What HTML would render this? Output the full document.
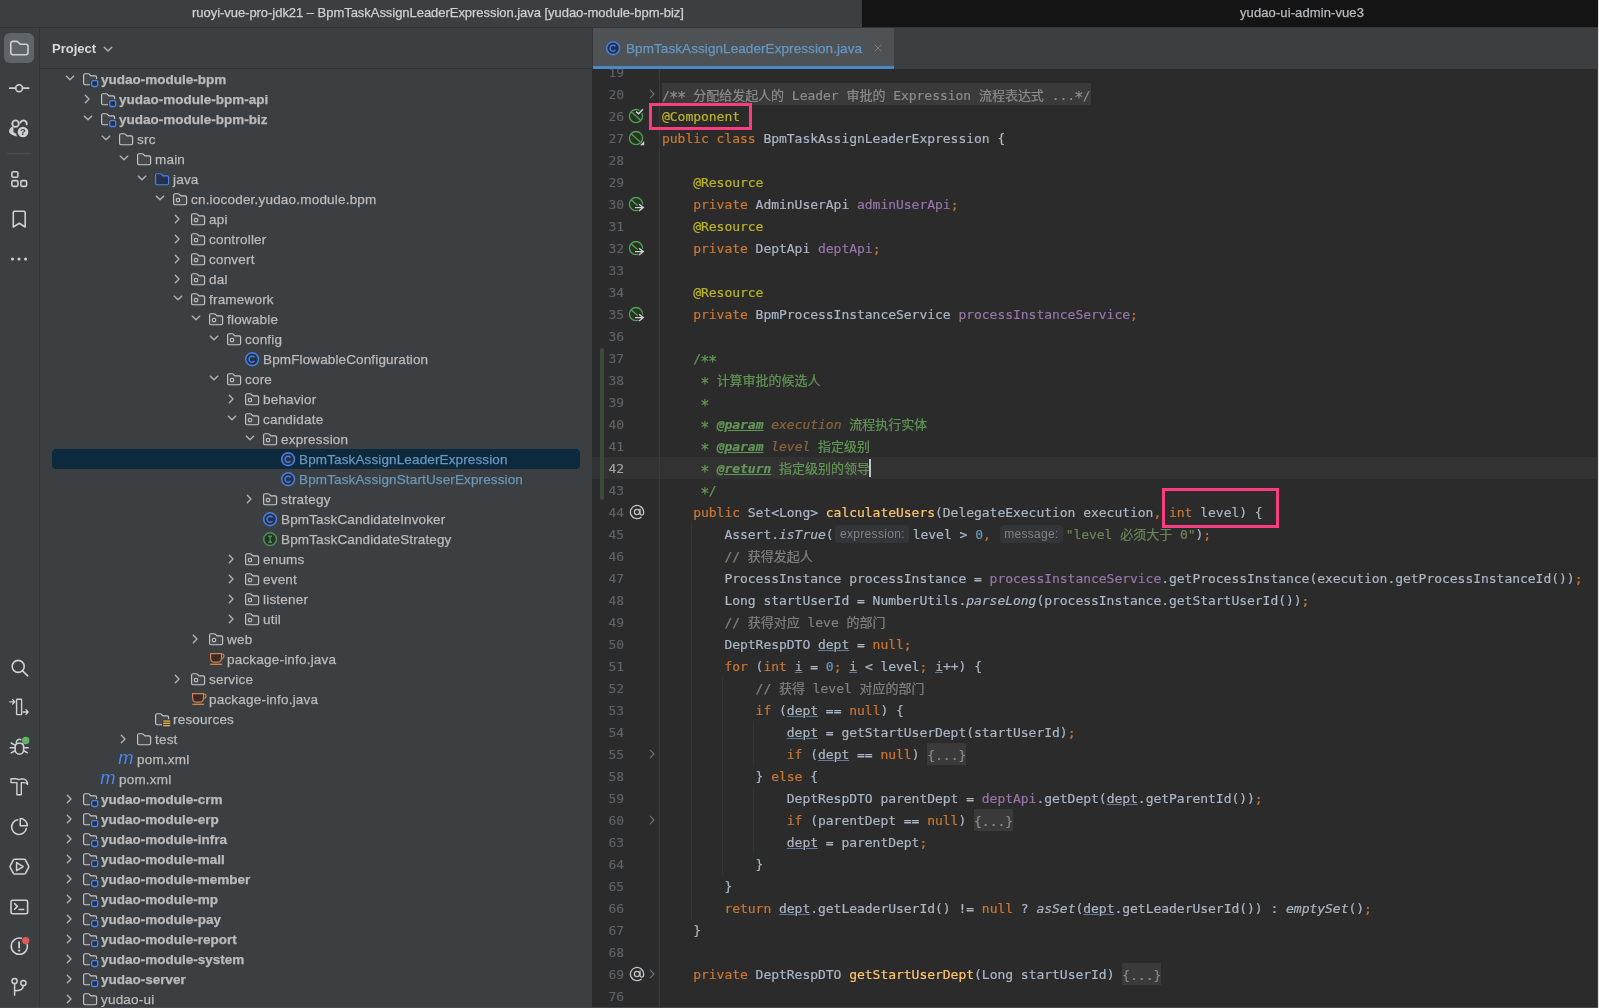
<!DOCTYPE html>
<html><head><meta charset="utf-8"><title>IDE</title><style>
*{box-sizing:border-box}
html,body{margin:0;padding:0;background:#3c3f41}
body{width:1599px;height:1008px;overflow:hidden;background:#3c3f41;position:relative;font-family:"Liberation Sans","Noto Sans CJK SC",sans-serif;font-size:13.5px;color:#bbbbbb;letter-spacing:.2px}
#root{position:absolute;left:0;top:0;width:1599px;height:1008px;will-change:transform}
.abs{position:absolute}
#title{left:192px;top:0;height:27px;line-height:26px;white-space:pre;font-size:13px;letter-spacing:-0.04px;color:#cfd0d2;-webkit-text-stroke:.25px}
#title2{left:862px;top:0;width:737px;height:27px;line-height:26px;background:#141414;padding-left:378px;white-space:pre;font-size:13px;letter-spacing:0.1px;color:#b9babc;-webkit-text-stroke:.25px}
#tline{left:0;top:27px;width:1599px;height:1px;background:#323436}
#strip{left:0;top:28px;width:39px;height:980px}
#sline{left:39px;top:28px;width:1px;height:980px;background:#323436}
#phead{left:40px;top:28px;width:552px;height:40px}
#pline{left:40px;top:68px;width:552px;height:1px;background:#323436}
#ptitle{left:52px;top:29px;height:40px;line-height:40px;font-weight:bold;color:#d6d8dc;font-size:13px;letter-spacing:0}
.row{position:absolute;left:40px;width:552px;height:20px;line-height:20px;white-space:pre}
.row span{position:absolute;top:1px;-webkit-text-stroke:.25px}
.row svg{position:absolute}
.b{font-weight:bold;letter-spacing:0}
.blue{color:#6897bb}
.cm{letter-spacing:.13px}
#sel{left:52px;top:449px;width:528px;height:20px;background:#0d293e;border-radius:4px}
#tabs{left:592px;top:28px;width:1007px;height:41px;background:#3c3f41;border-left:1px solid #333537}
#tab{left:593px;top:28px;width:301px;height:38px;background:#4e5254}
#tabu{left:593px;top:66px;width:301px;height:3px;background:#4a88c7}
#tabt{left:626px;top:29px;height:38px;line-height:39px;color:#6398c6;white-space:pre;letter-spacing:.08px;-webkit-text-stroke:.25px}
#editor{left:592px;top:69px;width:1007px;height:939px;background:#2b2b2b;overflow:hidden}
#caretrow{left:0;top:388px;width:1007px;height:22px;background:#323232}
.cl{position:absolute;left:70px;height:22px;line-height:22px;white-space:pre;font-family:"DejaVu Sans Mono","Noto Sans CJK SC",monospace;font-size:13px;letter-spacing:-0.0267px;color:#a9b7c6;-webkit-text-stroke:.2px}
.num{position:absolute;left:0;width:32px;text-align:right;height:22px;line-height:22px;font-family:"DejaVu Sans Mono",monospace;font-size:13px;letter-spacing:-0.0267px;color:#606366;-webkit-text-stroke:.15px}
.k{color:#cc7832}.a{color:#bbb529}.f{color:#9876aa}.m{color:#ffc66d}.s{color:#6a8759}.n{color:#6897bb}.c{color:#808080}.d{color:#629755}
.dt{color:#629755;font-weight:bold;font-style:italic;text-decoration:underline}
.dp{color:#8a653b;font-style:italic}
.i{font-style:italic}
.st{font-size:15.5px;margin:0 -0.75px;position:relative;top:3.8px;line-height:0}
.u{text-decoration:underline;text-decoration-color:#5f7b95;text-underline-offset:1px;text-decoration-thickness:1px}
.fold{background:#3a3a3a;color:#8c8c8c;padding-top:4.5px;padding-bottom:2.9px}
.hint{display:inline-block;-webkit-text-stroke:0;font-family:"Liberation Sans",sans-serif;font-size:12px;letter-spacing:.3px;color:#7f8287;background:#333538;border-radius:4px;height:18px;line-height:18px;vertical-align:top;margin-top:.5px;text-align:center}
.guide{position:absolute;width:1px;background:#353535}
.pink{position:absolute;border:3.8px solid #fb3c7f}
#gsep{left:67px;top:0;width:1px;height:939px;background:#37393b}
#vbar{left:8px;top:279px;width:4px;height:152px;background:#384c38;border-radius:2px}
#caret{position:absolute;width:2px;height:17.6px;background:#c4c6c9}
#redge{left:1598px;top:0;width:1px;height:1008px;background:#dcdcdc}
#redge2{left:1597px;top:28px;width:1px;height:980px;background:#3c3f41}
#bedge{left:0;top:1007px;width:1598px;height:1px;background:#46484b}
</style></head><body><div id="root">
<div id="title" class="abs">ruoyi-vue-pro-jdk21 – BpmTaskAssignLeaderExpression.java [yudao-module-bpm-biz]</div>
<div id="title2" class="abs">yudao-ui-admin-vue3</div>
<div id="tline" class="abs"></div>
<div id="sline" class="abs"></div>
<div class="abs" style="left:4px;top:33px;width:30px;height:30px;border-radius:6px;background:#5f6468"></div>
<div class="abs" style="left:7px;top:153px;width:24px;height:1px;background:#4b4e52"></div>
<svg class="abs" style="left:0;top:0" width="40" height="1008" viewBox="0 0 40 1008" fill="none" stroke="#ced0d6" stroke-width="1.6" stroke-linecap="round" stroke-linejoin="round">
<path d="M10.8 43.6 Q10.8 41.4 13 41.4 L16.6 41.4 Q17.4 41.4 18 42 L20.2 44.2 L25.8 44.2 Q28 44.2 28 46.4 L28 52.6 Q28 54.8 25.8 54.8 L13 54.8 Q10.8 54.8 10.8 52.6 Z"/>
<circle cx="19.1" cy="88.2" r="3.4"/><path d="M9.8 88.2H15.6M22.6 88.2H28.6" stroke-width="1.8"/>
<circle cx="15.55" cy="123.65" r="3.25" stroke-width="1.9"/>
<path d="M20.25 123.5 A3.25 3.25 0 1 1 26.4 125.2" stroke-width="1.9" stroke-linecap="butt"/>
<path d="M12.5 126.4 C9.6 128 8.6 130.4 9.2 132.2 C9.8 133.6 13 135.8 17.4 136.5 C16.6 135.6 16.2 134.6 16.1 133.6 C14.4 133 13.4 132.4 13.4 131.6 L13.4 127 Z" fill="#ced0d6" stroke="none"/>
<circle cx="23" cy="132" r="6.5" fill="#3c3f41" stroke="none"/>
<circle cx="23" cy="132" r="5.35" fill="#ced0d6" stroke="none"/>
<text x="23" y="135.3" text-anchor="middle" font-family="Liberation Sans, sans-serif" font-weight="bold" font-size="9.5" fill="#3c3f41" stroke="none">?</text>
<rect x="11.9" y="171.7" width="6" height="5.6" rx="1.3"/><rect x="11.9" y="180.6" width="6" height="5.8" rx="1.3"/><rect x="20.8" y="180.6" width="5.8" height="5.8" rx="1.3"/>
<path d="M13.3 212.4 Q13.3 211.2 14.5 211.2 L24 211.2 Q25.2 211.2 25.2 212.4 L25.2 227 L19.25 223.3 L13.3 227 Z"/>
<g fill="#ced0d6" stroke="none"><circle cx="12.5" cy="259" r="1.55"/><circle cx="19" cy="259" r="1.55"/><circle cx="25.6" cy="259" r="1.55"/></g>
<circle cx="18.2" cy="666.4" r="6"/><path d="M22.6 670.9 L27.7 675.8"/>
<rect x="16.6" y="699.2" width="5" height="15.4" rx="0.6" stroke-width="1.4"/>
<path d="M9.8 701.8H14.6M12.6 699.6L14.8 701.8L12.6 704" stroke-width="1.3"/><path d="M23.2 712H28M26 709.8L28.2 712L26 714.2" stroke-width="1.3"/>
<path d="M15.2 746.6 Q15.2 743.2 18.6 743.2 L20.2 743.2 Q23.6 743.2 23.6 746.6 L23.6 750 A4.2 4.2 0 0 1 15.2 750 Z" stroke-width="1.6"/>
<path d="M16.3 742.4 A3.3 3.3 0 0 1 20.8 739.6" stroke-width="1.5"/>
<path d="M11.2 743L14.4 744.8M10.2 747.8H14.6M11.2 752.8L14.6 751M24.4 751L27.4 752.8M24.3 747.8H28.3" stroke-width="1.5"/>
<circle cx="25.7" cy="740.5" r="3.7" fill="#5fb565" stroke="none"/>
<path d="M11 778.8 L11 782.6 L16.9 782.6 L16.9 794.8 L21.3 794.8 L21.3 782.6 L23.6 782.6 C25.6 782.6 27 783.2 27.6 784.4 C27.8 781 25.4 778.8 21.6 778.8 L19 779.6 L16 778.8 Z" stroke-width="1.4"/>
<path d="M17.6 819.8 A7.4 7.4 0 1 0 26.3 828.6"/>
<path d="M20.2 818.6 A7.2 7.2 0 0 1 27.4 825.8 L20.2 825.8 Z" stroke-width="1.5"/>
<path d="M14.6 859.2 L24.2 859.2 Q25 859.2 25.4 859.9 L28.6 865.9 Q29 866.6 28.6 867.3 L25.4 873.3 Q25 874 24.2 874 L14.6 874 Q13.8 874 13.4 873.3 L10.2 867.3 Q9.8 866.6 10.2 865.9 L13.4 859.9 Q13.8 859.2 14.6 859.2 Z"/>
<path d="M16.6 862.6 L23.2 866.6 L16.6 870.6 Z" stroke-width="1.5"/>
<rect x="11" y="900.2" width="16.6" height="13.6" rx="1.6"/><path d="M14.6 903.6L17.4 906.4L14.6 909.2M19 909.6H23.6" stroke-width="1.5"/>
<path d="M21.2 938.3 A8.1 8.1 0 1 0 27.3 944.6"/>
<path d="M19.1 942.2V947.6" stroke-width="1.8"/>
<circle cx="19.1" cy="950.6" r="1.15" fill="#ced0d6" stroke="none"/>
<circle cx="25.7" cy="940.6" r="3.7" fill="#db5c5c" stroke="none"/>
<circle cx="14.6" cy="981" r="2.6" stroke-width="1.5"/><circle cx="23.4" cy="983" r="2.6" stroke-width="1.5"/><path d="M14.6 983.8V995.2M23.4 985.8 C23.4 990 20 990.8 14.8 990.8" stroke-width="1.5"/>
</svg>
<div id="ptitle" class="abs">Project</div>
<svg class="abs" style="left:103px;top:43.6px" width="10" height="10" viewBox="0 0 10 10"><path d="M1.2 3.2 L5 7 L8.8 3.2" fill="none" stroke="#b1b4b8" stroke-width="1.35" stroke-linecap="round" stroke-linejoin="round"/></svg>
<div id="pline" class="abs"></div>
<div id="sel" class="abs"></div>
<div class="row" style="top:69px"><svg style="left:24.5px;top:4.4px" width="10" height="10" viewBox="0 0 10 10"><path d="M1.2 3.1 L5 6.8 L8.8 3.1" fill="none" stroke="#b1b4b8" stroke-width="1.35" stroke-linecap="round" stroke-linejoin="round"/></svg><svg style="left:42px;top:2px" width="17" height="17" viewBox="0 0 17 17"><path d="M1.6 4.2 Q1.6 2.7 3.1 2.7 L6.2 2.7 Q6.8 2.7 7.3 3.2 L8.9 4.8 L13.1 4.8 Q14.6 4.8 14.6 6.3 L14.6 12.2 Q14.6 13.7 13.1 13.7 L3.1 13.7 Q1.6 13.7 1.6 12.2 Z" fill="#45474b" stroke="none"/><path d="M8 13.7 L3.1 13.7 Q1.6 13.7 1.6 12.2 L1.6 4.2 Q1.6 2.7 3.1 2.7 L6.2 2.7 Q6.8 2.7 7.3 3.2 L8.9 4.8 L13.1 4.8 Q14.6 4.8 14.6 6.3 L14.6 8.2" fill="none" stroke="#c6c8cc" stroke-width="1.15"/><rect x="8.3" y="8.3" width="8.7" height="8.7" fill="#3c3f41"/><rect x="9.7" y="9.6" width="6.0" height="5.9" rx="1.4" fill="#22304c" stroke="#4d84ea" stroke-width="1.3"/></svg><span class="b" style="left:61px">yudao-module-bpm</span></div>
<div class="row" style="top:89px"><svg style="left:42.4px;top:4.6px" width="10" height="10" viewBox="0 0 10 10"><path d="M3.3 1.2 L7 5 L3.3 8.8" fill="none" stroke="#b1b4b8" stroke-width="1.35" stroke-linecap="round" stroke-linejoin="round"/></svg><svg style="left:60px;top:2px" width="17" height="17" viewBox="0 0 17 17"><path d="M1.6 4.2 Q1.6 2.7 3.1 2.7 L6.2 2.7 Q6.8 2.7 7.3 3.2 L8.9 4.8 L13.1 4.8 Q14.6 4.8 14.6 6.3 L14.6 12.2 Q14.6 13.7 13.1 13.7 L3.1 13.7 Q1.6 13.7 1.6 12.2 Z" fill="#45474b" stroke="none"/><path d="M8 13.7 L3.1 13.7 Q1.6 13.7 1.6 12.2 L1.6 4.2 Q1.6 2.7 3.1 2.7 L6.2 2.7 Q6.8 2.7 7.3 3.2 L8.9 4.8 L13.1 4.8 Q14.6 4.8 14.6 6.3 L14.6 8.2" fill="none" stroke="#c6c8cc" stroke-width="1.15"/><rect x="8.3" y="8.3" width="8.7" height="8.7" fill="#3c3f41"/><rect x="9.7" y="9.6" width="6.0" height="5.9" rx="1.4" fill="#22304c" stroke="#4d84ea" stroke-width="1.3"/></svg><span class="b" style="left:79px">yudao-module-bpm-api</span></div>
<div class="row" style="top:109px"><svg style="left:42.5px;top:4.4px" width="10" height="10" viewBox="0 0 10 10"><path d="M1.2 3.1 L5 6.8 L8.8 3.1" fill="none" stroke="#b1b4b8" stroke-width="1.35" stroke-linecap="round" stroke-linejoin="round"/></svg><svg style="left:60px;top:2px" width="17" height="17" viewBox="0 0 17 17"><path d="M1.6 4.2 Q1.6 2.7 3.1 2.7 L6.2 2.7 Q6.8 2.7 7.3 3.2 L8.9 4.8 L13.1 4.8 Q14.6 4.8 14.6 6.3 L14.6 12.2 Q14.6 13.7 13.1 13.7 L3.1 13.7 Q1.6 13.7 1.6 12.2 Z" fill="#45474b" stroke="none"/><path d="M8 13.7 L3.1 13.7 Q1.6 13.7 1.6 12.2 L1.6 4.2 Q1.6 2.7 3.1 2.7 L6.2 2.7 Q6.8 2.7 7.3 3.2 L8.9 4.8 L13.1 4.8 Q14.6 4.8 14.6 6.3 L14.6 8.2" fill="none" stroke="#c6c8cc" stroke-width="1.15"/><rect x="8.3" y="8.3" width="8.7" height="8.7" fill="#3c3f41"/><rect x="9.7" y="9.6" width="6.0" height="5.9" rx="1.4" fill="#22304c" stroke="#4d84ea" stroke-width="1.3"/></svg><span class="b" style="left:79px">yudao-module-bpm-biz</span></div>
<div class="row" style="top:129px"><svg style="left:60.5px;top:4.4px" width="10" height="10" viewBox="0 0 10 10"><path d="M1.2 3.1 L5 6.8 L8.8 3.1" fill="none" stroke="#b1b4b8" stroke-width="1.35" stroke-linecap="round" stroke-linejoin="round"/></svg><svg style="left:78px;top:2px" width="17" height="17" viewBox="0 0 17 17"><path d="M1.6 4.2 Q1.6 2.7 3.1 2.7 L6.2 2.7 Q6.8 2.7 7.3 3.2 L8.9 4.8 L13.1 4.8 Q14.6 4.8 14.6 6.3 L14.6 12.2 Q14.6 13.7 13.1 13.7 L3.1 13.7 Q1.6 13.7 1.6 12.2 Z" fill="#45474b" stroke="#c6c8cc" stroke-width="1.15"/></svg><span class="" style="left:97px">src</span></div>
<div class="row" style="top:149px"><svg style="left:78.5px;top:4.4px" width="10" height="10" viewBox="0 0 10 10"><path d="M1.2 3.1 L5 6.8 L8.8 3.1" fill="none" stroke="#b1b4b8" stroke-width="1.35" stroke-linecap="round" stroke-linejoin="round"/></svg><svg style="left:96px;top:2px" width="17" height="17" viewBox="0 0 17 17"><path d="M1.6 4.2 Q1.6 2.7 3.1 2.7 L6.2 2.7 Q6.8 2.7 7.3 3.2 L8.9 4.8 L13.1 4.8 Q14.6 4.8 14.6 6.3 L14.6 12.2 Q14.6 13.7 13.1 13.7 L3.1 13.7 Q1.6 13.7 1.6 12.2 Z" fill="#45474b" stroke="#c6c8cc" stroke-width="1.15"/></svg><span class="" style="left:115px">main</span></div>
<div class="row" style="top:169px"><svg style="left:96.5px;top:4.4px" width="10" height="10" viewBox="0 0 10 10"><path d="M1.2 3.1 L5 6.8 L8.8 3.1" fill="none" stroke="#b1b4b8" stroke-width="1.35" stroke-linecap="round" stroke-linejoin="round"/></svg><svg style="left:114px;top:2px" width="17" height="17" viewBox="0 0 17 17"><path d="M1.6 4.2 Q1.6 2.7 3.1 2.7 L6.2 2.7 Q6.8 2.7 7.3 3.2 L8.9 4.8 L13.1 4.8 Q14.6 4.8 14.6 6.3 L14.6 12.2 Q14.6 13.7 13.1 13.7 L3.1 13.7 Q1.6 13.7 1.6 12.2 Z" fill="#25324d" stroke="#4d84ea" stroke-width="1.15"/></svg><span class="" style="left:133px">java</span></div>
<div class="row" style="top:189px"><svg style="left:114.5px;top:4.4px" width="10" height="10" viewBox="0 0 10 10"><path d="M1.2 3.1 L5 6.8 L8.8 3.1" fill="none" stroke="#b1b4b8" stroke-width="1.35" stroke-linecap="round" stroke-linejoin="round"/></svg><svg style="left:132px;top:2px" width="17" height="17" viewBox="0 0 17 17"><path d="M1.6 4.2 Q1.6 2.7 3.1 2.7 L6.2 2.7 Q6.8 2.7 7.3 3.2 L8.9 4.8 L13.1 4.8 Q14.6 4.8 14.6 6.3 L14.6 12.2 Q14.6 13.7 13.1 13.7 L3.1 13.7 Q1.6 13.7 1.6 12.2 Z" fill="#45474b" stroke="#c6c8cc" stroke-width="1.15"/><circle cx="6" cy="9.1" r="1.8" fill="none" stroke="#c6c8cc" stroke-width="1.1"/></svg><span class="" style="left:151px">cn.iocoder.yudao.module.bpm</span></div>
<div class="row" style="top:209px"><svg style="left:132.4px;top:4.6px" width="10" height="10" viewBox="0 0 10 10"><path d="M3.3 1.2 L7 5 L3.3 8.8" fill="none" stroke="#b1b4b8" stroke-width="1.35" stroke-linecap="round" stroke-linejoin="round"/></svg><svg style="left:150px;top:2px" width="17" height="17" viewBox="0 0 17 17"><path d="M1.6 4.2 Q1.6 2.7 3.1 2.7 L6.2 2.7 Q6.8 2.7 7.3 3.2 L8.9 4.8 L13.1 4.8 Q14.6 4.8 14.6 6.3 L14.6 12.2 Q14.6 13.7 13.1 13.7 L3.1 13.7 Q1.6 13.7 1.6 12.2 Z" fill="#45474b" stroke="#c6c8cc" stroke-width="1.15"/><circle cx="6" cy="9.1" r="1.8" fill="none" stroke="#c6c8cc" stroke-width="1.1"/></svg><span class="" style="left:169px">api</span></div>
<div class="row" style="top:229px"><svg style="left:132.4px;top:4.6px" width="10" height="10" viewBox="0 0 10 10"><path d="M3.3 1.2 L7 5 L3.3 8.8" fill="none" stroke="#b1b4b8" stroke-width="1.35" stroke-linecap="round" stroke-linejoin="round"/></svg><svg style="left:150px;top:2px" width="17" height="17" viewBox="0 0 17 17"><path d="M1.6 4.2 Q1.6 2.7 3.1 2.7 L6.2 2.7 Q6.8 2.7 7.3 3.2 L8.9 4.8 L13.1 4.8 Q14.6 4.8 14.6 6.3 L14.6 12.2 Q14.6 13.7 13.1 13.7 L3.1 13.7 Q1.6 13.7 1.6 12.2 Z" fill="#45474b" stroke="#c6c8cc" stroke-width="1.15"/><circle cx="6" cy="9.1" r="1.8" fill="none" stroke="#c6c8cc" stroke-width="1.1"/></svg><span class="" style="left:169px">controller</span></div>
<div class="row" style="top:249px"><svg style="left:132.4px;top:4.6px" width="10" height="10" viewBox="0 0 10 10"><path d="M3.3 1.2 L7 5 L3.3 8.8" fill="none" stroke="#b1b4b8" stroke-width="1.35" stroke-linecap="round" stroke-linejoin="round"/></svg><svg style="left:150px;top:2px" width="17" height="17" viewBox="0 0 17 17"><path d="M1.6 4.2 Q1.6 2.7 3.1 2.7 L6.2 2.7 Q6.8 2.7 7.3 3.2 L8.9 4.8 L13.1 4.8 Q14.6 4.8 14.6 6.3 L14.6 12.2 Q14.6 13.7 13.1 13.7 L3.1 13.7 Q1.6 13.7 1.6 12.2 Z" fill="#45474b" stroke="#c6c8cc" stroke-width="1.15"/><circle cx="6" cy="9.1" r="1.8" fill="none" stroke="#c6c8cc" stroke-width="1.1"/></svg><span class="" style="left:169px">convert</span></div>
<div class="row" style="top:269px"><svg style="left:132.4px;top:4.6px" width="10" height="10" viewBox="0 0 10 10"><path d="M3.3 1.2 L7 5 L3.3 8.8" fill="none" stroke="#b1b4b8" stroke-width="1.35" stroke-linecap="round" stroke-linejoin="round"/></svg><svg style="left:150px;top:2px" width="17" height="17" viewBox="0 0 17 17"><path d="M1.6 4.2 Q1.6 2.7 3.1 2.7 L6.2 2.7 Q6.8 2.7 7.3 3.2 L8.9 4.8 L13.1 4.8 Q14.6 4.8 14.6 6.3 L14.6 12.2 Q14.6 13.7 13.1 13.7 L3.1 13.7 Q1.6 13.7 1.6 12.2 Z" fill="#45474b" stroke="#c6c8cc" stroke-width="1.15"/><circle cx="6" cy="9.1" r="1.8" fill="none" stroke="#c6c8cc" stroke-width="1.1"/></svg><span class="" style="left:169px">dal</span></div>
<div class="row" style="top:289px"><svg style="left:132.5px;top:4.4px" width="10" height="10" viewBox="0 0 10 10"><path d="M1.2 3.1 L5 6.8 L8.8 3.1" fill="none" stroke="#b1b4b8" stroke-width="1.35" stroke-linecap="round" stroke-linejoin="round"/></svg><svg style="left:150px;top:2px" width="17" height="17" viewBox="0 0 17 17"><path d="M1.6 4.2 Q1.6 2.7 3.1 2.7 L6.2 2.7 Q6.8 2.7 7.3 3.2 L8.9 4.8 L13.1 4.8 Q14.6 4.8 14.6 6.3 L14.6 12.2 Q14.6 13.7 13.1 13.7 L3.1 13.7 Q1.6 13.7 1.6 12.2 Z" fill="#45474b" stroke="#c6c8cc" stroke-width="1.15"/><circle cx="6" cy="9.1" r="1.8" fill="none" stroke="#c6c8cc" stroke-width="1.1"/></svg><span class="" style="left:169px">framework</span></div>
<div class="row" style="top:309px"><svg style="left:150.5px;top:4.4px" width="10" height="10" viewBox="0 0 10 10"><path d="M1.2 3.1 L5 6.8 L8.8 3.1" fill="none" stroke="#b1b4b8" stroke-width="1.35" stroke-linecap="round" stroke-linejoin="round"/></svg><svg style="left:168px;top:2px" width="17" height="17" viewBox="0 0 17 17"><path d="M1.6 4.2 Q1.6 2.7 3.1 2.7 L6.2 2.7 Q6.8 2.7 7.3 3.2 L8.9 4.8 L13.1 4.8 Q14.6 4.8 14.6 6.3 L14.6 12.2 Q14.6 13.7 13.1 13.7 L3.1 13.7 Q1.6 13.7 1.6 12.2 Z" fill="#45474b" stroke="#c6c8cc" stroke-width="1.15"/><circle cx="6" cy="9.1" r="1.8" fill="none" stroke="#c6c8cc" stroke-width="1.1"/></svg><span class="" style="left:187px">flowable</span></div>
<div class="row" style="top:329px"><svg style="left:168.5px;top:4.4px" width="10" height="10" viewBox="0 0 10 10"><path d="M1.2 3.1 L5 6.8 L8.8 3.1" fill="none" stroke="#b1b4b8" stroke-width="1.35" stroke-linecap="round" stroke-linejoin="round"/></svg><svg style="left:186px;top:2px" width="17" height="17" viewBox="0 0 17 17"><path d="M1.6 4.2 Q1.6 2.7 3.1 2.7 L6.2 2.7 Q6.8 2.7 7.3 3.2 L8.9 4.8 L13.1 4.8 Q14.6 4.8 14.6 6.3 L14.6 12.2 Q14.6 13.7 13.1 13.7 L3.1 13.7 Q1.6 13.7 1.6 12.2 Z" fill="#45474b" stroke="#c6c8cc" stroke-width="1.15"/><circle cx="6" cy="9.1" r="1.8" fill="none" stroke="#c6c8cc" stroke-width="1.1"/></svg><span class="" style="left:205px">config</span></div>
<div class="row" style="top:349px"><svg style="left:204px;top:2px" width="17" height="17" viewBox="0 0 17 17"><circle cx="8.1" cy="8.2" r="6.4" fill="#22304c" stroke="#4a7ede" stroke-width="1.55"/><path d="M10.5 6.5 A3 3 0 1 0 10.5 9.9" fill="none" stroke="#4a7ede" stroke-width="1.5"/></svg><span class="cm" style="left:223px">BpmFlowableConfiguration</span></div>
<div class="row" style="top:369px"><svg style="left:168.5px;top:4.4px" width="10" height="10" viewBox="0 0 10 10"><path d="M1.2 3.1 L5 6.8 L8.8 3.1" fill="none" stroke="#b1b4b8" stroke-width="1.35" stroke-linecap="round" stroke-linejoin="round"/></svg><svg style="left:186px;top:2px" width="17" height="17" viewBox="0 0 17 17"><path d="M1.6 4.2 Q1.6 2.7 3.1 2.7 L6.2 2.7 Q6.8 2.7 7.3 3.2 L8.9 4.8 L13.1 4.8 Q14.6 4.8 14.6 6.3 L14.6 12.2 Q14.6 13.7 13.1 13.7 L3.1 13.7 Q1.6 13.7 1.6 12.2 Z" fill="#45474b" stroke="#c6c8cc" stroke-width="1.15"/><circle cx="6" cy="9.1" r="1.8" fill="none" stroke="#c6c8cc" stroke-width="1.1"/></svg><span class="" style="left:205px">core</span></div>
<div class="row" style="top:389px"><svg style="left:186.4px;top:4.6px" width="10" height="10" viewBox="0 0 10 10"><path d="M3.3 1.2 L7 5 L3.3 8.8" fill="none" stroke="#b1b4b8" stroke-width="1.35" stroke-linecap="round" stroke-linejoin="round"/></svg><svg style="left:204px;top:2px" width="17" height="17" viewBox="0 0 17 17"><path d="M1.6 4.2 Q1.6 2.7 3.1 2.7 L6.2 2.7 Q6.8 2.7 7.3 3.2 L8.9 4.8 L13.1 4.8 Q14.6 4.8 14.6 6.3 L14.6 12.2 Q14.6 13.7 13.1 13.7 L3.1 13.7 Q1.6 13.7 1.6 12.2 Z" fill="#45474b" stroke="#c6c8cc" stroke-width="1.15"/><circle cx="6" cy="9.1" r="1.8" fill="none" stroke="#c6c8cc" stroke-width="1.1"/></svg><span class="" style="left:223px">behavior</span></div>
<div class="row" style="top:409px"><svg style="left:186.5px;top:4.4px" width="10" height="10" viewBox="0 0 10 10"><path d="M1.2 3.1 L5 6.8 L8.8 3.1" fill="none" stroke="#b1b4b8" stroke-width="1.35" stroke-linecap="round" stroke-linejoin="round"/></svg><svg style="left:204px;top:2px" width="17" height="17" viewBox="0 0 17 17"><path d="M1.6 4.2 Q1.6 2.7 3.1 2.7 L6.2 2.7 Q6.8 2.7 7.3 3.2 L8.9 4.8 L13.1 4.8 Q14.6 4.8 14.6 6.3 L14.6 12.2 Q14.6 13.7 13.1 13.7 L3.1 13.7 Q1.6 13.7 1.6 12.2 Z" fill="#45474b" stroke="#c6c8cc" stroke-width="1.15"/><circle cx="6" cy="9.1" r="1.8" fill="none" stroke="#c6c8cc" stroke-width="1.1"/></svg><span class="" style="left:223px">candidate</span></div>
<div class="row" style="top:429px"><svg style="left:204.5px;top:4.4px" width="10" height="10" viewBox="0 0 10 10"><path d="M1.2 3.1 L5 6.8 L8.8 3.1" fill="none" stroke="#b1b4b8" stroke-width="1.35" stroke-linecap="round" stroke-linejoin="round"/></svg><svg style="left:222px;top:2px" width="17" height="17" viewBox="0 0 17 17"><path d="M1.6 4.2 Q1.6 2.7 3.1 2.7 L6.2 2.7 Q6.8 2.7 7.3 3.2 L8.9 4.8 L13.1 4.8 Q14.6 4.8 14.6 6.3 L14.6 12.2 Q14.6 13.7 13.1 13.7 L3.1 13.7 Q1.6 13.7 1.6 12.2 Z" fill="#45474b" stroke="#c6c8cc" stroke-width="1.15"/><circle cx="6" cy="9.1" r="1.8" fill="none" stroke="#c6c8cc" stroke-width="1.1"/></svg><span class="" style="left:241px">expression</span></div>
<div class="row" style="top:449px"><svg style="left:240px;top:2px" width="17" height="17" viewBox="0 0 17 17"><circle cx="8.1" cy="8.2" r="6.4" fill="#22304c" stroke="#4a7ede" stroke-width="1.55"/><path d="M10.5 6.5 A3 3 0 1 0 10.5 9.9" fill="none" stroke="#4a7ede" stroke-width="1.5"/></svg><span class="blue cm" style="left:259px">BpmTaskAssignLeaderExpression</span></div>
<div class="row" style="top:469px"><svg style="left:240px;top:2px" width="17" height="17" viewBox="0 0 17 17"><circle cx="8.1" cy="8.2" r="6.4" fill="#22304c" stroke="#4a7ede" stroke-width="1.55"/><path d="M10.5 6.5 A3 3 0 1 0 10.5 9.9" fill="none" stroke="#4a7ede" stroke-width="1.5"/></svg><span class="blue cm" style="left:259px">BpmTaskAssignStartUserExpression</span></div>
<div class="row" style="top:489px"><svg style="left:204.4px;top:4.6px" width="10" height="10" viewBox="0 0 10 10"><path d="M3.3 1.2 L7 5 L3.3 8.8" fill="none" stroke="#b1b4b8" stroke-width="1.35" stroke-linecap="round" stroke-linejoin="round"/></svg><svg style="left:222px;top:2px" width="17" height="17" viewBox="0 0 17 17"><path d="M1.6 4.2 Q1.6 2.7 3.1 2.7 L6.2 2.7 Q6.8 2.7 7.3 3.2 L8.9 4.8 L13.1 4.8 Q14.6 4.8 14.6 6.3 L14.6 12.2 Q14.6 13.7 13.1 13.7 L3.1 13.7 Q1.6 13.7 1.6 12.2 Z" fill="#45474b" stroke="#c6c8cc" stroke-width="1.15"/><circle cx="6" cy="9.1" r="1.8" fill="none" stroke="#c6c8cc" stroke-width="1.1"/></svg><span class="" style="left:241px">strategy</span></div>
<div class="row" style="top:509px"><svg style="left:222px;top:2px" width="17" height="17" viewBox="0 0 17 17"><circle cx="8.1" cy="8.2" r="6.4" fill="#22304c" stroke="#4a7ede" stroke-width="1.55"/><path d="M10.5 6.5 A3 3 0 1 0 10.5 9.9" fill="none" stroke="#4a7ede" stroke-width="1.5"/></svg><span class="cm" style="left:241px">BpmTaskCandidateInvoker</span></div>
<div class="row" style="top:529px"><svg style="left:222px;top:2px" width="17" height="17" viewBox="0 0 17 17"><circle cx="8.1" cy="8.2" r="6.4" fill="#243526" stroke="#518e56" stroke-width="1.5"/><path d="M6.2 5.2h3.8M8.1 5.2v6M6.2 11.2h3.8" fill="none" stroke="#518e56" stroke-width="1.35"/></svg><span class="cm" style="left:241px">BpmTaskCandidateStrategy</span></div>
<div class="row" style="top:549px"><svg style="left:186.4px;top:4.6px" width="10" height="10" viewBox="0 0 10 10"><path d="M3.3 1.2 L7 5 L3.3 8.8" fill="none" stroke="#b1b4b8" stroke-width="1.35" stroke-linecap="round" stroke-linejoin="round"/></svg><svg style="left:204px;top:2px" width="17" height="17" viewBox="0 0 17 17"><path d="M1.6 4.2 Q1.6 2.7 3.1 2.7 L6.2 2.7 Q6.8 2.7 7.3 3.2 L8.9 4.8 L13.1 4.8 Q14.6 4.8 14.6 6.3 L14.6 12.2 Q14.6 13.7 13.1 13.7 L3.1 13.7 Q1.6 13.7 1.6 12.2 Z" fill="#45474b" stroke="#c6c8cc" stroke-width="1.15"/><circle cx="6" cy="9.1" r="1.8" fill="none" stroke="#c6c8cc" stroke-width="1.1"/></svg><span class="" style="left:223px">enums</span></div>
<div class="row" style="top:569px"><svg style="left:186.4px;top:4.6px" width="10" height="10" viewBox="0 0 10 10"><path d="M3.3 1.2 L7 5 L3.3 8.8" fill="none" stroke="#b1b4b8" stroke-width="1.35" stroke-linecap="round" stroke-linejoin="round"/></svg><svg style="left:204px;top:2px" width="17" height="17" viewBox="0 0 17 17"><path d="M1.6 4.2 Q1.6 2.7 3.1 2.7 L6.2 2.7 Q6.8 2.7 7.3 3.2 L8.9 4.8 L13.1 4.8 Q14.6 4.8 14.6 6.3 L14.6 12.2 Q14.6 13.7 13.1 13.7 L3.1 13.7 Q1.6 13.7 1.6 12.2 Z" fill="#45474b" stroke="#c6c8cc" stroke-width="1.15"/><circle cx="6" cy="9.1" r="1.8" fill="none" stroke="#c6c8cc" stroke-width="1.1"/></svg><span class="" style="left:223px">event</span></div>
<div class="row" style="top:589px"><svg style="left:186.4px;top:4.6px" width="10" height="10" viewBox="0 0 10 10"><path d="M3.3 1.2 L7 5 L3.3 8.8" fill="none" stroke="#b1b4b8" stroke-width="1.35" stroke-linecap="round" stroke-linejoin="round"/></svg><svg style="left:204px;top:2px" width="17" height="17" viewBox="0 0 17 17"><path d="M1.6 4.2 Q1.6 2.7 3.1 2.7 L6.2 2.7 Q6.8 2.7 7.3 3.2 L8.9 4.8 L13.1 4.8 Q14.6 4.8 14.6 6.3 L14.6 12.2 Q14.6 13.7 13.1 13.7 L3.1 13.7 Q1.6 13.7 1.6 12.2 Z" fill="#45474b" stroke="#c6c8cc" stroke-width="1.15"/><circle cx="6" cy="9.1" r="1.8" fill="none" stroke="#c6c8cc" stroke-width="1.1"/></svg><span class="" style="left:223px">listener</span></div>
<div class="row" style="top:609px"><svg style="left:186.4px;top:4.6px" width="10" height="10" viewBox="0 0 10 10"><path d="M3.3 1.2 L7 5 L3.3 8.8" fill="none" stroke="#b1b4b8" stroke-width="1.35" stroke-linecap="round" stroke-linejoin="round"/></svg><svg style="left:204px;top:2px" width="17" height="17" viewBox="0 0 17 17"><path d="M1.6 4.2 Q1.6 2.7 3.1 2.7 L6.2 2.7 Q6.8 2.7 7.3 3.2 L8.9 4.8 L13.1 4.8 Q14.6 4.8 14.6 6.3 L14.6 12.2 Q14.6 13.7 13.1 13.7 L3.1 13.7 Q1.6 13.7 1.6 12.2 Z" fill="#45474b" stroke="#c6c8cc" stroke-width="1.15"/><circle cx="6" cy="9.1" r="1.8" fill="none" stroke="#c6c8cc" stroke-width="1.1"/></svg><span class="" style="left:223px">util</span></div>
<div class="row" style="top:629px"><svg style="left:150.4px;top:4.6px" width="10" height="10" viewBox="0 0 10 10"><path d="M3.3 1.2 L7 5 L3.3 8.8" fill="none" stroke="#b1b4b8" stroke-width="1.35" stroke-linecap="round" stroke-linejoin="round"/></svg><svg style="left:168px;top:2px" width="17" height="17" viewBox="0 0 17 17"><path d="M1.6 4.2 Q1.6 2.7 3.1 2.7 L6.2 2.7 Q6.8 2.7 7.3 3.2 L8.9 4.8 L13.1 4.8 Q14.6 4.8 14.6 6.3 L14.6 12.2 Q14.6 13.7 13.1 13.7 L3.1 13.7 Q1.6 13.7 1.6 12.2 Z" fill="#45474b" stroke="#c6c8cc" stroke-width="1.15"/><circle cx="6" cy="9.1" r="1.8" fill="none" stroke="#c6c8cc" stroke-width="1.1"/></svg><span class="" style="left:187px">web</span></div>
<div class="row" style="top:649px"><svg style="left:168px;top:2px" width="17" height="17" viewBox="0 0 17 17"><path d="M2.6 2.6 L13.5 2.6 L13.5 6.5 Q13.5 11.2 9.5 11.2 L6.6 11.2 Q2.6 11.2 2.6 6.5 Z" fill="#3d2a20" stroke="#cf8154" stroke-width="1.2"/><path d="M13.6 3 Q16 2.8 16 5 Q16 7.3 13.4 7.6" fill="none" stroke="#cf8154" stroke-width="1.1"/><path d="M2.3 13.3h11.8" stroke="#e58b4e" stroke-width="1.2"/></svg><span class="" style="left:187px">package-info.java</span></div>
<div class="row" style="top:669px"><svg style="left:132.4px;top:4.6px" width="10" height="10" viewBox="0 0 10 10"><path d="M3.3 1.2 L7 5 L3.3 8.8" fill="none" stroke="#b1b4b8" stroke-width="1.35" stroke-linecap="round" stroke-linejoin="round"/></svg><svg style="left:150px;top:2px" width="17" height="17" viewBox="0 0 17 17"><path d="M1.6 4.2 Q1.6 2.7 3.1 2.7 L6.2 2.7 Q6.8 2.7 7.3 3.2 L8.9 4.8 L13.1 4.8 Q14.6 4.8 14.6 6.3 L14.6 12.2 Q14.6 13.7 13.1 13.7 L3.1 13.7 Q1.6 13.7 1.6 12.2 Z" fill="#45474b" stroke="#c6c8cc" stroke-width="1.15"/><circle cx="6" cy="9.1" r="1.8" fill="none" stroke="#c6c8cc" stroke-width="1.1"/></svg><span class="" style="left:169px">service</span></div>
<div class="row" style="top:689px"><svg style="left:150px;top:2px" width="17" height="17" viewBox="0 0 17 17"><path d="M2.6 2.6 L13.5 2.6 L13.5 6.5 Q13.5 11.2 9.5 11.2 L6.6 11.2 Q2.6 11.2 2.6 6.5 Z" fill="#3d2a20" stroke="#cf8154" stroke-width="1.2"/><path d="M13.6 3 Q16 2.8 16 5 Q16 7.3 13.4 7.6" fill="none" stroke="#cf8154" stroke-width="1.1"/><path d="M2.3 13.3h11.8" stroke="#e58b4e" stroke-width="1.2"/></svg><span class="" style="left:169px">package-info.java</span></div>
<div class="row" style="top:709px"><svg style="left:114px;top:2px" width="17" height="17" viewBox="0 0 17 17"><path d="M1.6 4.2 Q1.6 2.7 3.1 2.7 L6.2 2.7 Q6.8 2.7 7.3 3.2 L8.9 4.8 L13.1 4.8 Q14.6 4.8 14.6 6.3 L14.6 12.2 Q14.6 13.7 13.1 13.7 L3.1 13.7 Q1.6 13.7 1.6 12.2 Z" fill="#45474b" stroke="none"/><path d="M8 13.7 L3.1 13.7 Q1.6 13.7 1.6 12.2 L1.6 4.2 Q1.6 2.7 3.1 2.7 L6.2 2.7 Q6.8 2.7 7.3 3.2 L8.9 4.8 L13.1 4.8 Q14.6 4.8 14.6 6.3 L14.6 8.2" fill="none" stroke="#c6c8cc" stroke-width="1.15"/><rect x="8" y="8.6" width="9" height="8.4" fill="#3c3f41"/><path d="M9.2 10.1h7M9.2 12.4h7M9.2 14.7h7" stroke="#e6b64c" stroke-width="1.25"/></svg><span class="" style="left:133px">resources</span></div>
<div class="row" style="top:729px"><svg style="left:78.4px;top:4.6px" width="10" height="10" viewBox="0 0 10 10"><path d="M3.3 1.2 L7 5 L3.3 8.8" fill="none" stroke="#b1b4b8" stroke-width="1.35" stroke-linecap="round" stroke-linejoin="round"/></svg><svg style="left:96px;top:2px" width="17" height="17" viewBox="0 0 17 17"><path d="M1.6 4.2 Q1.6 2.7 3.1 2.7 L6.2 2.7 Q6.8 2.7 7.3 3.2 L8.9 4.8 L13.1 4.8 Q14.6 4.8 14.6 6.3 L14.6 12.2 Q14.6 13.7 13.1 13.7 L3.1 13.7 Q1.6 13.7 1.6 12.2 Z" fill="#45474b" stroke="#c6c8cc" stroke-width="1.15"/></svg><span class="" style="left:115px">test</span></div>
<div class="row" style="top:749px"><svg style="left:78px;top:2px" width="17" height="17" viewBox="0 0 17 17"><text x="0.2" y="12.9" font-family="Liberation Sans, sans-serif" font-style="italic" font-size="18.3" letter-spacing="0" fill="#4b86ee">m</text></svg><span class="" style="left:97px">pom.xml</span></div>
<div class="row" style="top:769px"><svg style="left:60px;top:2px" width="17" height="17" viewBox="0 0 17 17"><text x="0.2" y="12.9" font-family="Liberation Sans, sans-serif" font-style="italic" font-size="18.3" letter-spacing="0" fill="#4b86ee">m</text></svg><span class="" style="left:79px">pom.xml</span></div>
<div class="row" style="top:789px"><svg style="left:24.4px;top:4.6px" width="10" height="10" viewBox="0 0 10 10"><path d="M3.3 1.2 L7 5 L3.3 8.8" fill="none" stroke="#b1b4b8" stroke-width="1.35" stroke-linecap="round" stroke-linejoin="round"/></svg><svg style="left:42px;top:2px" width="17" height="17" viewBox="0 0 17 17"><path d="M1.6 4.2 Q1.6 2.7 3.1 2.7 L6.2 2.7 Q6.8 2.7 7.3 3.2 L8.9 4.8 L13.1 4.8 Q14.6 4.8 14.6 6.3 L14.6 12.2 Q14.6 13.7 13.1 13.7 L3.1 13.7 Q1.6 13.7 1.6 12.2 Z" fill="#45474b" stroke="none"/><path d="M8 13.7 L3.1 13.7 Q1.6 13.7 1.6 12.2 L1.6 4.2 Q1.6 2.7 3.1 2.7 L6.2 2.7 Q6.8 2.7 7.3 3.2 L8.9 4.8 L13.1 4.8 Q14.6 4.8 14.6 6.3 L14.6 8.2" fill="none" stroke="#c6c8cc" stroke-width="1.15"/><rect x="8.3" y="8.3" width="8.7" height="8.7" fill="#3c3f41"/><rect x="9.7" y="9.6" width="6.0" height="5.9" rx="1.4" fill="#22304c" stroke="#4d84ea" stroke-width="1.3"/></svg><span class="b" style="left:61px">yudao-module-crm</span></div>
<div class="row" style="top:809px"><svg style="left:24.4px;top:4.6px" width="10" height="10" viewBox="0 0 10 10"><path d="M3.3 1.2 L7 5 L3.3 8.8" fill="none" stroke="#b1b4b8" stroke-width="1.35" stroke-linecap="round" stroke-linejoin="round"/></svg><svg style="left:42px;top:2px" width="17" height="17" viewBox="0 0 17 17"><path d="M1.6 4.2 Q1.6 2.7 3.1 2.7 L6.2 2.7 Q6.8 2.7 7.3 3.2 L8.9 4.8 L13.1 4.8 Q14.6 4.8 14.6 6.3 L14.6 12.2 Q14.6 13.7 13.1 13.7 L3.1 13.7 Q1.6 13.7 1.6 12.2 Z" fill="#45474b" stroke="none"/><path d="M8 13.7 L3.1 13.7 Q1.6 13.7 1.6 12.2 L1.6 4.2 Q1.6 2.7 3.1 2.7 L6.2 2.7 Q6.8 2.7 7.3 3.2 L8.9 4.8 L13.1 4.8 Q14.6 4.8 14.6 6.3 L14.6 8.2" fill="none" stroke="#c6c8cc" stroke-width="1.15"/><rect x="8.3" y="8.3" width="8.7" height="8.7" fill="#3c3f41"/><rect x="9.7" y="9.6" width="6.0" height="5.9" rx="1.4" fill="#22304c" stroke="#4d84ea" stroke-width="1.3"/></svg><span class="b" style="left:61px">yudao-module-erp</span></div>
<div class="row" style="top:829px"><svg style="left:24.4px;top:4.6px" width="10" height="10" viewBox="0 0 10 10"><path d="M3.3 1.2 L7 5 L3.3 8.8" fill="none" stroke="#b1b4b8" stroke-width="1.35" stroke-linecap="round" stroke-linejoin="round"/></svg><svg style="left:42px;top:2px" width="17" height="17" viewBox="0 0 17 17"><path d="M1.6 4.2 Q1.6 2.7 3.1 2.7 L6.2 2.7 Q6.8 2.7 7.3 3.2 L8.9 4.8 L13.1 4.8 Q14.6 4.8 14.6 6.3 L14.6 12.2 Q14.6 13.7 13.1 13.7 L3.1 13.7 Q1.6 13.7 1.6 12.2 Z" fill="#45474b" stroke="none"/><path d="M8 13.7 L3.1 13.7 Q1.6 13.7 1.6 12.2 L1.6 4.2 Q1.6 2.7 3.1 2.7 L6.2 2.7 Q6.8 2.7 7.3 3.2 L8.9 4.8 L13.1 4.8 Q14.6 4.8 14.6 6.3 L14.6 8.2" fill="none" stroke="#c6c8cc" stroke-width="1.15"/><rect x="8.3" y="8.3" width="8.7" height="8.7" fill="#3c3f41"/><rect x="9.7" y="9.6" width="6.0" height="5.9" rx="1.4" fill="#22304c" stroke="#4d84ea" stroke-width="1.3"/></svg><span class="b" style="left:61px">yudao-module-infra</span></div>
<div class="row" style="top:849px"><svg style="left:24.4px;top:4.6px" width="10" height="10" viewBox="0 0 10 10"><path d="M3.3 1.2 L7 5 L3.3 8.8" fill="none" stroke="#b1b4b8" stroke-width="1.35" stroke-linecap="round" stroke-linejoin="round"/></svg><svg style="left:42px;top:2px" width="17" height="17" viewBox="0 0 17 17"><path d="M1.6 4.2 Q1.6 2.7 3.1 2.7 L6.2 2.7 Q6.8 2.7 7.3 3.2 L8.9 4.8 L13.1 4.8 Q14.6 4.8 14.6 6.3 L14.6 12.2 Q14.6 13.7 13.1 13.7 L3.1 13.7 Q1.6 13.7 1.6 12.2 Z" fill="#45474b" stroke="none"/><path d="M8 13.7 L3.1 13.7 Q1.6 13.7 1.6 12.2 L1.6 4.2 Q1.6 2.7 3.1 2.7 L6.2 2.7 Q6.8 2.7 7.3 3.2 L8.9 4.8 L13.1 4.8 Q14.6 4.8 14.6 6.3 L14.6 8.2" fill="none" stroke="#c6c8cc" stroke-width="1.15"/><rect x="8.3" y="8.3" width="8.7" height="8.7" fill="#3c3f41"/><rect x="9.7" y="9.6" width="6.0" height="5.9" rx="1.4" fill="#22304c" stroke="#4d84ea" stroke-width="1.3"/></svg><span class="b" style="left:61px">yudao-module-mall</span></div>
<div class="row" style="top:869px"><svg style="left:24.4px;top:4.6px" width="10" height="10" viewBox="0 0 10 10"><path d="M3.3 1.2 L7 5 L3.3 8.8" fill="none" stroke="#b1b4b8" stroke-width="1.35" stroke-linecap="round" stroke-linejoin="round"/></svg><svg style="left:42px;top:2px" width="17" height="17" viewBox="0 0 17 17"><path d="M1.6 4.2 Q1.6 2.7 3.1 2.7 L6.2 2.7 Q6.8 2.7 7.3 3.2 L8.9 4.8 L13.1 4.8 Q14.6 4.8 14.6 6.3 L14.6 12.2 Q14.6 13.7 13.1 13.7 L3.1 13.7 Q1.6 13.7 1.6 12.2 Z" fill="#45474b" stroke="none"/><path d="M8 13.7 L3.1 13.7 Q1.6 13.7 1.6 12.2 L1.6 4.2 Q1.6 2.7 3.1 2.7 L6.2 2.7 Q6.8 2.7 7.3 3.2 L8.9 4.8 L13.1 4.8 Q14.6 4.8 14.6 6.3 L14.6 8.2" fill="none" stroke="#c6c8cc" stroke-width="1.15"/><rect x="8.3" y="8.3" width="8.7" height="8.7" fill="#3c3f41"/><rect x="9.7" y="9.6" width="6.0" height="5.9" rx="1.4" fill="#22304c" stroke="#4d84ea" stroke-width="1.3"/></svg><span class="b" style="left:61px">yudao-module-member</span></div>
<div class="row" style="top:889px"><svg style="left:24.4px;top:4.6px" width="10" height="10" viewBox="0 0 10 10"><path d="M3.3 1.2 L7 5 L3.3 8.8" fill="none" stroke="#b1b4b8" stroke-width="1.35" stroke-linecap="round" stroke-linejoin="round"/></svg><svg style="left:42px;top:2px" width="17" height="17" viewBox="0 0 17 17"><path d="M1.6 4.2 Q1.6 2.7 3.1 2.7 L6.2 2.7 Q6.8 2.7 7.3 3.2 L8.9 4.8 L13.1 4.8 Q14.6 4.8 14.6 6.3 L14.6 12.2 Q14.6 13.7 13.1 13.7 L3.1 13.7 Q1.6 13.7 1.6 12.2 Z" fill="#45474b" stroke="none"/><path d="M8 13.7 L3.1 13.7 Q1.6 13.7 1.6 12.2 L1.6 4.2 Q1.6 2.7 3.1 2.7 L6.2 2.7 Q6.8 2.7 7.3 3.2 L8.9 4.8 L13.1 4.8 Q14.6 4.8 14.6 6.3 L14.6 8.2" fill="none" stroke="#c6c8cc" stroke-width="1.15"/><rect x="8.3" y="8.3" width="8.7" height="8.7" fill="#3c3f41"/><rect x="9.7" y="9.6" width="6.0" height="5.9" rx="1.4" fill="#22304c" stroke="#4d84ea" stroke-width="1.3"/></svg><span class="b" style="left:61px">yudao-module-mp</span></div>
<div class="row" style="top:909px"><svg style="left:24.4px;top:4.6px" width="10" height="10" viewBox="0 0 10 10"><path d="M3.3 1.2 L7 5 L3.3 8.8" fill="none" stroke="#b1b4b8" stroke-width="1.35" stroke-linecap="round" stroke-linejoin="round"/></svg><svg style="left:42px;top:2px" width="17" height="17" viewBox="0 0 17 17"><path d="M1.6 4.2 Q1.6 2.7 3.1 2.7 L6.2 2.7 Q6.8 2.7 7.3 3.2 L8.9 4.8 L13.1 4.8 Q14.6 4.8 14.6 6.3 L14.6 12.2 Q14.6 13.7 13.1 13.7 L3.1 13.7 Q1.6 13.7 1.6 12.2 Z" fill="#45474b" stroke="none"/><path d="M8 13.7 L3.1 13.7 Q1.6 13.7 1.6 12.2 L1.6 4.2 Q1.6 2.7 3.1 2.7 L6.2 2.7 Q6.8 2.7 7.3 3.2 L8.9 4.8 L13.1 4.8 Q14.6 4.8 14.6 6.3 L14.6 8.2" fill="none" stroke="#c6c8cc" stroke-width="1.15"/><rect x="8.3" y="8.3" width="8.7" height="8.7" fill="#3c3f41"/><rect x="9.7" y="9.6" width="6.0" height="5.9" rx="1.4" fill="#22304c" stroke="#4d84ea" stroke-width="1.3"/></svg><span class="b" style="left:61px">yudao-module-pay</span></div>
<div class="row" style="top:929px"><svg style="left:24.4px;top:4.6px" width="10" height="10" viewBox="0 0 10 10"><path d="M3.3 1.2 L7 5 L3.3 8.8" fill="none" stroke="#b1b4b8" stroke-width="1.35" stroke-linecap="round" stroke-linejoin="round"/></svg><svg style="left:42px;top:2px" width="17" height="17" viewBox="0 0 17 17"><path d="M1.6 4.2 Q1.6 2.7 3.1 2.7 L6.2 2.7 Q6.8 2.7 7.3 3.2 L8.9 4.8 L13.1 4.8 Q14.6 4.8 14.6 6.3 L14.6 12.2 Q14.6 13.7 13.1 13.7 L3.1 13.7 Q1.6 13.7 1.6 12.2 Z" fill="#45474b" stroke="none"/><path d="M8 13.7 L3.1 13.7 Q1.6 13.7 1.6 12.2 L1.6 4.2 Q1.6 2.7 3.1 2.7 L6.2 2.7 Q6.8 2.7 7.3 3.2 L8.9 4.8 L13.1 4.8 Q14.6 4.8 14.6 6.3 L14.6 8.2" fill="none" stroke="#c6c8cc" stroke-width="1.15"/><rect x="8.3" y="8.3" width="8.7" height="8.7" fill="#3c3f41"/><rect x="9.7" y="9.6" width="6.0" height="5.9" rx="1.4" fill="#22304c" stroke="#4d84ea" stroke-width="1.3"/></svg><span class="b" style="left:61px">yudao-module-report</span></div>
<div class="row" style="top:949px"><svg style="left:24.4px;top:4.6px" width="10" height="10" viewBox="0 0 10 10"><path d="M3.3 1.2 L7 5 L3.3 8.8" fill="none" stroke="#b1b4b8" stroke-width="1.35" stroke-linecap="round" stroke-linejoin="round"/></svg><svg style="left:42px;top:2px" width="17" height="17" viewBox="0 0 17 17"><path d="M1.6 4.2 Q1.6 2.7 3.1 2.7 L6.2 2.7 Q6.8 2.7 7.3 3.2 L8.9 4.8 L13.1 4.8 Q14.6 4.8 14.6 6.3 L14.6 12.2 Q14.6 13.7 13.1 13.7 L3.1 13.7 Q1.6 13.7 1.6 12.2 Z" fill="#45474b" stroke="none"/><path d="M8 13.7 L3.1 13.7 Q1.6 13.7 1.6 12.2 L1.6 4.2 Q1.6 2.7 3.1 2.7 L6.2 2.7 Q6.8 2.7 7.3 3.2 L8.9 4.8 L13.1 4.8 Q14.6 4.8 14.6 6.3 L14.6 8.2" fill="none" stroke="#c6c8cc" stroke-width="1.15"/><rect x="8.3" y="8.3" width="8.7" height="8.7" fill="#3c3f41"/><rect x="9.7" y="9.6" width="6.0" height="5.9" rx="1.4" fill="#22304c" stroke="#4d84ea" stroke-width="1.3"/></svg><span class="b" style="left:61px">yudao-module-system</span></div>
<div class="row" style="top:969px"><svg style="left:24.4px;top:4.6px" width="10" height="10" viewBox="0 0 10 10"><path d="M3.3 1.2 L7 5 L3.3 8.8" fill="none" stroke="#b1b4b8" stroke-width="1.35" stroke-linecap="round" stroke-linejoin="round"/></svg><svg style="left:42px;top:2px" width="17" height="17" viewBox="0 0 17 17"><path d="M1.6 4.2 Q1.6 2.7 3.1 2.7 L6.2 2.7 Q6.8 2.7 7.3 3.2 L8.9 4.8 L13.1 4.8 Q14.6 4.8 14.6 6.3 L14.6 12.2 Q14.6 13.7 13.1 13.7 L3.1 13.7 Q1.6 13.7 1.6 12.2 Z" fill="#45474b" stroke="none"/><path d="M8 13.7 L3.1 13.7 Q1.6 13.7 1.6 12.2 L1.6 4.2 Q1.6 2.7 3.1 2.7 L6.2 2.7 Q6.8 2.7 7.3 3.2 L8.9 4.8 L13.1 4.8 Q14.6 4.8 14.6 6.3 L14.6 8.2" fill="none" stroke="#c6c8cc" stroke-width="1.15"/><rect x="8.3" y="8.3" width="8.7" height="8.7" fill="#3c3f41"/><rect x="9.7" y="9.6" width="6.0" height="5.9" rx="1.4" fill="#22304c" stroke="#4d84ea" stroke-width="1.3"/></svg><span class="b" style="left:61px">yudao-server</span></div>
<div class="row" style="top:989px"><svg style="left:24.4px;top:4.6px" width="10" height="10" viewBox="0 0 10 10"><path d="M3.3 1.2 L7 5 L3.3 8.8" fill="none" stroke="#b1b4b8" stroke-width="1.35" stroke-linecap="round" stroke-linejoin="round"/></svg><svg style="left:42px;top:2px" width="17" height="17" viewBox="0 0 17 17"><path d="M1.6 4.2 Q1.6 2.7 3.1 2.7 L6.2 2.7 Q6.8 2.7 7.3 3.2 L8.9 4.8 L13.1 4.8 Q14.6 4.8 14.6 6.3 L14.6 12.2 Q14.6 13.7 13.1 13.7 L3.1 13.7 Q1.6 13.7 1.6 12.2 Z" fill="#45474b" stroke="#c6c8cc" stroke-width="1.15"/></svg><span class="" style="left:61px">yudao-ui</span></div>
<div id="tabs" class="abs"></div>
<div id="tab" class="abs"></div>
<div id="tabu" class="abs"></div>
<svg class="abs" style="left:604.7px;top:39.8px" width="17" height="17" viewBox="0 0 17 17"><circle cx="8.1" cy="8.2" r="6.4" fill="#22304c" stroke="#4a7ede" stroke-width="1.55"/><path d="M10.5 6.5 A3 3 0 1 0 10.5 9.9" fill="none" stroke="#4a7ede" stroke-width="1.5"/></svg>
<div id="tabt" class="abs">BpmTaskAssignLeaderExpression.java</div>
<svg class="abs" style="left:873px;top:43px" width="10" height="10" viewBox="0 0 10 10"><path d="M1.7 1.7 L8.3 8.3 M8.3 1.7 L1.7 8.3" stroke="#7a7e83" stroke-width="1"/></svg>
<div id="editor" class="abs">
<div id="caretrow" class="abs"></div>
<div id="gsep" class="abs"></div>
<div id="vbar" class="abs"></div>
<div class="guide" style="left:99.29999999999995px;top:454px;height:396px"></div>
<div class="guide" style="left:130.39999999999998px;top:608px;height:198px"></div>
<div class="guide" style="left:161.29999999999995px;top:652px;height:44px"></div>
<div class="guide" style="left:161.29999999999995px;top:718px;height:66px"></div>
<div class="num" style="top:-7px">19</div>
<div class="num" style="top:15px">20</div>
<div class="cl" style="top:15px"><span class="fold">/<span class="st">*</span><span class="st">*</span> 分配给发起人的 Leader 审批的 Expression 流程表达式 ...<span class="st">*</span>/</span></div>
<svg class="abs" style="left:55px;top:20px" width="10" height="10" viewBox="0 0 10 10"><path d="M3.2 1.2 L7 5 L3.2 8.8" fill="none" stroke="#6f737a" stroke-width="1.1" stroke-linecap="round" stroke-linejoin="round"/></svg>
<div class="num" style="top:37px">26</div>
<div class="cl" style="top:37px"><span class="a">@Component</span></div>
<svg class="abs" style="left:36px;top:38px" width="18" height="18" viewBox="0 0 18 18"><circle cx="8" cy="9.1" r="6.6" fill="#23371f" stroke="#589a5c" stroke-width="1.3"/><path d="M3.2 4.8 L12.8 13.4" stroke="#589a5c" stroke-width="1.3"/><path d="M8.1 4.7 L10.6 6.7 L14.9 2.3" fill="none" stroke="#2b2b2b" stroke-width="3.6"/><path d="M8.1 4.7 L10.6 6.7 L14.9 2.3" fill="none" stroke="#ced0d6" stroke-width="1.5"/></svg>
<div class="num" style="top:59px">27</div>
<div class="cl" style="top:59px"><span class="k">public class </span>BpmTaskAssignLeaderExpression {</div>
<svg class="abs" style="left:36px;top:60px" width="18" height="18" viewBox="0 0 18 18"><circle cx="8" cy="9.1" r="6.6" fill="#23371f" stroke="#589a5c" stroke-width="1.3"/><path d="M3.2 4.8 L12.8 13.4" stroke="#589a5c" stroke-width="1.3"/><path d="M17 10.5 L17 17 L10.5 17 Z" fill="#2b2b2b"/><path d="M16.2 12 L16.2 16.2 L12 16.2 Z" fill="#ced0d6"/></svg>
<div class="num" style="top:81px">28</div>
<div class="num" style="top:103px">29</div>
<div class="cl" style="top:103px">    <span class="a">@Resource</span></div>
<div class="num" style="top:125px">30</div>
<div class="cl" style="top:125px">    <span class="k">private </span>AdminUserApi <span class="f">adminUserApi</span><span class="k">;</span></div>
<svg class="abs" style="left:36px;top:126px" width="18" height="18" viewBox="0 0 18 18"><circle cx="8" cy="9.1" r="6.6" fill="#23371f" stroke="#589a5c" stroke-width="1.3"/><path d="M3.2 4.8 L12.8 13.4" stroke="#589a5c" stroke-width="1.3"/><path d="M6.2 12.6H15.1M11 9.2L15.3 12.6L11 16" fill="none" stroke="#2b2b2b" stroke-width="3.6"/><path d="M7 12.6H15.1M11 9.2L15.3 12.6L11 16" fill="none" stroke="#ced0d6" stroke-width="1.4"/></svg>
<div class="num" style="top:147px">31</div>
<div class="cl" style="top:147px">    <span class="a">@Resource</span></div>
<div class="num" style="top:169px">32</div>
<div class="cl" style="top:169px">    <span class="k">private </span>DeptApi <span class="f">deptApi</span><span class="k">;</span></div>
<svg class="abs" style="left:36px;top:170px" width="18" height="18" viewBox="0 0 18 18"><circle cx="8" cy="9.1" r="6.6" fill="#23371f" stroke="#589a5c" stroke-width="1.3"/><path d="M3.2 4.8 L12.8 13.4" stroke="#589a5c" stroke-width="1.3"/><path d="M6.2 12.6H15.1M11 9.2L15.3 12.6L11 16" fill="none" stroke="#2b2b2b" stroke-width="3.6"/><path d="M7 12.6H15.1M11 9.2L15.3 12.6L11 16" fill="none" stroke="#ced0d6" stroke-width="1.4"/></svg>
<div class="num" style="top:191px">33</div>
<div class="num" style="top:213px">34</div>
<div class="cl" style="top:213px">    <span class="a">@Resource</span></div>
<div class="num" style="top:235px">35</div>
<div class="cl" style="top:235px">    <span class="k">private </span>BpmProcessInstanceService <span class="f">processInstanceService</span><span class="k">;</span></div>
<svg class="abs" style="left:36px;top:236px" width="18" height="18" viewBox="0 0 18 18"><circle cx="8" cy="9.1" r="6.6" fill="#23371f" stroke="#589a5c" stroke-width="1.3"/><path d="M3.2 4.8 L12.8 13.4" stroke="#589a5c" stroke-width="1.3"/><path d="M6.2 12.6H15.1M11 9.2L15.3 12.6L11 16" fill="none" stroke="#2b2b2b" stroke-width="3.6"/><path d="M7 12.6H15.1M11 9.2L15.3 12.6L11 16" fill="none" stroke="#ced0d6" stroke-width="1.4"/></svg>
<div class="num" style="top:257px">36</div>
<div class="num" style="top:279px">37</div>
<div class="cl" style="top:279px">    <span class="d">/<span class="st">*</span><span class="st">*</span></span></div>
<div class="num" style="top:301px">38</div>
<div class="cl" style="top:301px">    <span class="d"> <span class="st">*</span> 计算审批的候选人</span></div>
<div class="num" style="top:323px">39</div>
<div class="cl" style="top:323px">    <span class="d"> <span class="st">*</span></span></div>
<div class="num" style="top:345px">40</div>
<div class="cl" style="top:345px">    <span class="d"> <span class="st">*</span> </span><span class="dt">@param</span> <span class="dp">execution</span><span class="d"> 流程执行实体</span></div>
<div class="num" style="top:367px">41</div>
<div class="cl" style="top:367px">    <span class="d"> <span class="st">*</span> </span><span class="dt">@param</span> <span class="dp">level</span><span class="d"> 指定级别</span></div>
<div class="num" style="top:389px;color:#a4a3a3">42</div>
<div class="cl" style="top:389px">    <span class="d"> <span class="st">*</span> </span><span class="dt">@return</span><span class="d"> 指定级别的领导</span></div>
<div class="num" style="top:411px">43</div>
<div class="cl" style="top:411px">    <span class="d"> <span class="st">*</span>/</span></div>
<div class="num" style="top:433px">44</div>
<div class="cl" style="top:433px">    <span class="k">public </span>Set&lt;Long&gt; <span class="m">calculateUsers</span>(DelegateExecution execution<span class="k">, int </span>level) {</div>
<svg class="abs" style="left:36.9px;top:435px" width="16" height="16" viewBox="0 0 16 16" fill="none" stroke="#c0c2c7" stroke-width="1.35" stroke-linecap="round"><path d="M12.1 13.2 A6.6 6.6 0 1 1 14.6 8 V9.3 A1.8 1.8 0 0 1 11 9.3 V5.2"/><circle cx="8" cy="8" r="2.6"/></svg>
<div class="num" style="top:455px">45</div>
<div class="cl" style="top:455px">        Assert.<span class="i">isTrue</span>(<span class="hint" style="width:74px;margin-left:1.8px;margin-right:3.3px">expression:</span>level &gt; <span class="n">0</span><span class="k">,</span> <span class="hint" style="width:63.2px;margin-left:1.2px;margin-right:2.7px">message:</span><span class="s">&quot;level 必须大于 0&quot;</span>)<span class="k">;</span></div>
<div class="num" style="top:477px">46</div>
<div class="cl" style="top:477px">        <span class="c">// 获得发起人</span></div>
<div class="num" style="top:499px">47</div>
<div class="cl" style="top:499px">        ProcessInstance processInstance = <span class="f">processInstanceService</span>.getProcessInstance(execution.getProcessInstanceId())<span class="k">;</span></div>
<div class="num" style="top:521px">48</div>
<div class="cl" style="top:521px">        Long startUserId = NumberUtils.<span class="i">parseLong</span>(processInstance.getStartUserId())<span class="k">;</span></div>
<div class="num" style="top:543px">49</div>
<div class="cl" style="top:543px">        <span class="c">// 获得对应 leve 的部门</span></div>
<div class="num" style="top:565px">50</div>
<div class="cl" style="top:565px">        DeptRespDTO <span class="u">dept</span> = <span class="k">null;</span></div>
<div class="num" style="top:587px">51</div>
<div class="cl" style="top:587px">        <span class="k">for </span>(<span class="k">int </span><span class="u">i</span> = <span class="n">0</span><span class="k">;</span> <span class="u">i</span> &lt; level<span class="k">;</span> <span class="u">i</span>++) {</div>
<div class="num" style="top:609px">52</div>
<div class="cl" style="top:609px">            <span class="c">// 获得 level 对应的部门</span></div>
<div class="num" style="top:631px">53</div>
<div class="cl" style="top:631px">            <span class="k">if </span>(<span class="u">dept</span> == <span class="k">null</span>) {</div>
<div class="num" style="top:653px">54</div>
<div class="cl" style="top:653px">                <span class="u">dept</span> = getStartUserDept(startUserId)<span class="k">;</span></div>
<div class="num" style="top:675px">55</div>
<div class="cl" style="top:675px">                <span class="k">if </span>(<span class="u">dept</span> == <span class="k">null</span>) <span class="fold">{...}</span></div>
<svg class="abs" style="left:55px;top:680px" width="10" height="10" viewBox="0 0 10 10"><path d="M3.2 1.2 L7 5 L3.2 8.8" fill="none" stroke="#6f737a" stroke-width="1.1" stroke-linecap="round" stroke-linejoin="round"/></svg>
<div class="num" style="top:697px">58</div>
<div class="cl" style="top:697px">            } <span class="k">else </span>{</div>
<div class="num" style="top:719px">59</div>
<div class="cl" style="top:719px">                DeptRespDTO parentDept = <span class="f">deptApi</span>.getDept(<span class="u">dept</span>.getParentId())<span class="k">;</span></div>
<div class="num" style="top:741px">60</div>
<div class="cl" style="top:741px">                <span class="k">if </span>(parentDept == <span class="k">null</span>) <span class="fold">{...}</span></div>
<svg class="abs" style="left:55px;top:746px" width="10" height="10" viewBox="0 0 10 10"><path d="M3.2 1.2 L7 5 L3.2 8.8" fill="none" stroke="#6f737a" stroke-width="1.1" stroke-linecap="round" stroke-linejoin="round"/></svg>
<div class="num" style="top:763px">63</div>
<div class="cl" style="top:763px">                <span class="u">dept</span> = parentDept<span class="k">;</span></div>
<div class="num" style="top:785px">64</div>
<div class="cl" style="top:785px">            }</div>
<div class="num" style="top:807px">65</div>
<div class="cl" style="top:807px">        }</div>
<div class="num" style="top:829px">66</div>
<div class="cl" style="top:829px">        <span class="k">return </span><span class="u">dept</span>.getLeaderUserId() != <span class="k">null</span> ? <span class="i">asSet</span>(<span class="u">dept</span>.getLeaderUserId()) : <span class="i">emptySet</span>()<span class="k">;</span></div>
<div class="num" style="top:851px">67</div>
<div class="cl" style="top:851px">    }</div>
<div class="num" style="top:873px">68</div>
<div class="num" style="top:895px">69</div>
<div class="cl" style="top:895px">    <span class="k">private </span>DeptRespDTO <span class="m">getStartUserDept</span>(Long startUserId) <span class="fold">{...}</span></div>
<svg class="abs" style="left:55px;top:900px" width="10" height="10" viewBox="0 0 10 10"><path d="M3.2 1.2 L7 5 L3.2 8.8" fill="none" stroke="#6f737a" stroke-width="1.1" stroke-linecap="round" stroke-linejoin="round"/></svg>
<svg class="abs" style="left:36.9px;top:897px" width="16" height="16" viewBox="0 0 16 16" fill="none" stroke="#c0c2c7" stroke-width="1.35" stroke-linecap="round"><path d="M12.1 13.2 A6.6 6.6 0 1 1 14.6 8 V9.3 A1.8 1.8 0 0 1 11 9.3 V5.2"/><circle cx="8" cy="8" r="2.6"/></svg>
<div class="num" style="top:917px">76</div>
<div id="caret" style="left:277.3px;top:390.3px"></div>
<div class="pink" style="left:57.2px;top:33.5px;width:102.5px;height:27.2px"></div>
<div class="pink" style="left:569.6px;top:418.9px;width:117.6px;height:40.3px"></div>
</div>
<div id="redge2" class="abs"></div>
<div id="redge" class="abs"></div>
<div id="bedge" class="abs"></div>
</div></body></html>
